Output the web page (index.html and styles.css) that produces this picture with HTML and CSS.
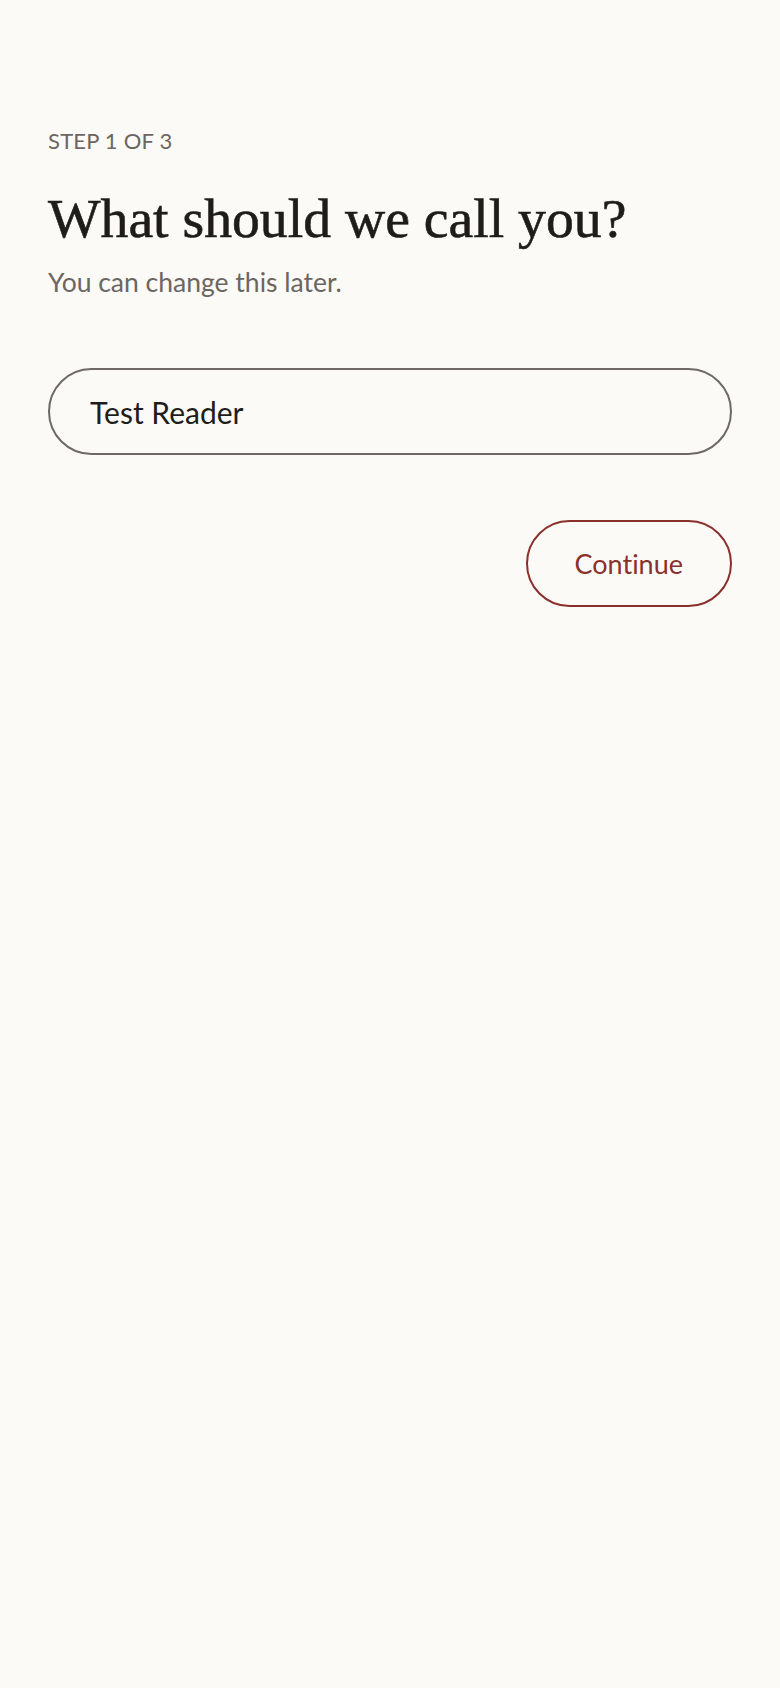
FILE: index.html
```html
<!DOCTYPE html>
<html lang="en">
<head>
<meta charset="utf-8">
<title>What should we call you?</title>
<link rel="stylesheet" href="styles.css">
</head>
<body>
<main class="page">
  <p class="step">STEP 1 OF 3</p>
  <h1 class="title">What should we call you?</h1>
  <p class="subtitle">You can change this later.</p>
  <form class="form">
    <input class="name-input" type="text" value="Test Reader" aria-label="Name">
    <div class="actions">
      <button class="continue" type="button">Continue</button>
    </div>
  </form>
</main>
</body>
</html>
```

FILE: styles.css
```css
html, body {
  margin: 0;
  padding: 0;
  background: #fbfaf6;
}

body {
  min-height: 1688px;
  font-family: Lato, "Noto Sans", sans-serif;
  font-variant-ligatures: none;
  color: #1f1d1a;
}

.page {
  padding: 128px 48px 0 48px;
}

.step {
  margin: 0;
  font-size: 22px;
  line-height: 26px;
  letter-spacing: 0.2px;
  color: #6b6661;
}

.title {
  margin: 34px 0 0;
  font-family: "Liberation Serif", serif;
  font-weight: 400;
  font-size: 55.7px;
  line-height: 60px;
  color: #1f1d1a;
  -webkit-text-stroke: 0.6px #1f1d1a;
}

.subtitle {
  margin: 18px 0 0;
  font-size: 26.5px;
  line-height: 32px;
  color: #6b6661;
}

.form {
  margin-top: 70px;
  display: flex;
  flex-direction: column;
}

.name-input {
  box-sizing: border-box;
  width: 100%;
  height: 87px;
  padding: 0 40px;
  border: 2px solid #6e6964;
  border-radius: 44px;
  background: transparent;
  font-family: Lato, "Noto Sans", sans-serif;
  font-variant-ligatures: none;
  font-size: 30px;
  color: #1f1d1a;
  outline: none;
}

.actions {
  margin-top: 65px;
  display: flex;
  justify-content: flex-end;
}

.continue {
  box-sizing: border-box;
  height: 87px;
  padding: 0 47px;
  border: 2px solid #8a302c;
  border-radius: 44px;
  background: transparent;
  font-family: Lato, "Noto Sans", sans-serif;
  font-variant-ligatures: none;
  font-size: 27px;
  color: #8a302c;
  cursor: pointer;
}
```
